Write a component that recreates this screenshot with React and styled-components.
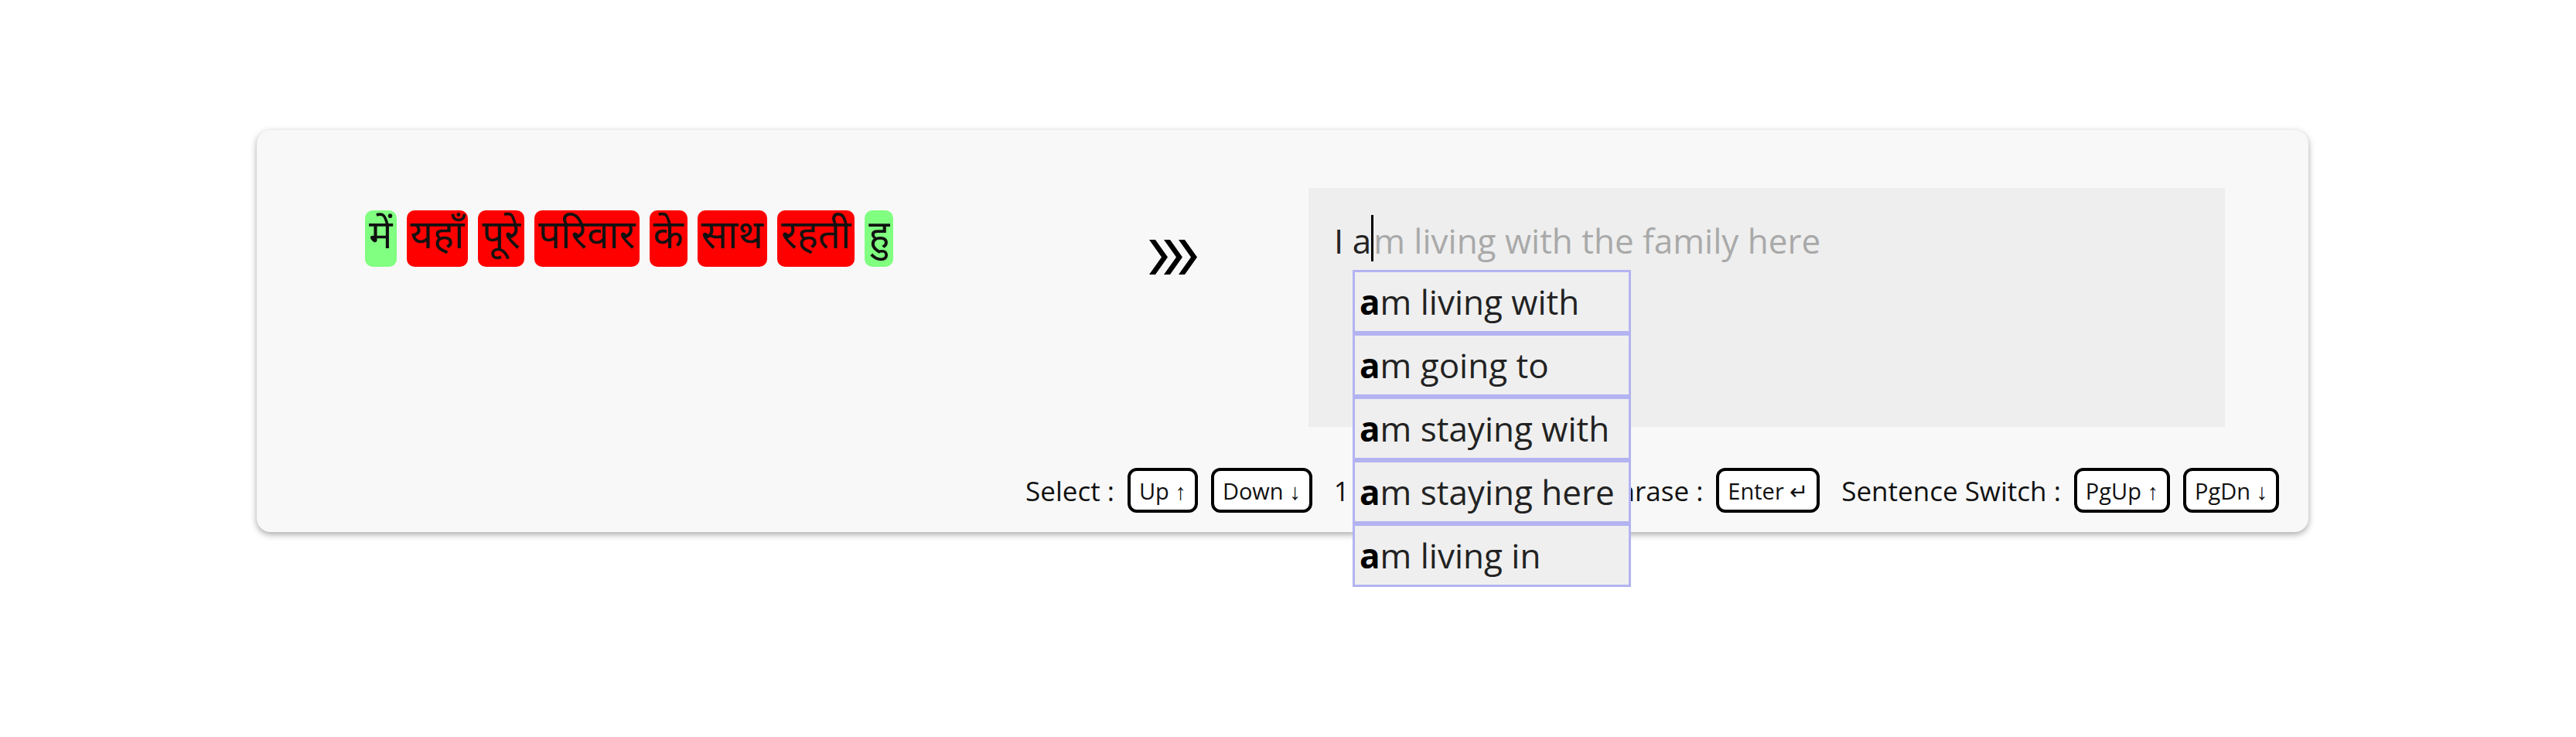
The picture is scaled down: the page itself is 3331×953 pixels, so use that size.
import styled, { createGlobalStyle } from 'styled-components'

const sourceWords = [
  { text: 'में', ok: true },
  { text: 'यहाँ', ok: false },
  { text: 'पूरे', ok: false },
  { text: 'परिवार', ok: false },
  { text: 'के', ok: false },
  { text: 'साथ', ok: false },
  { text: 'रहती', ok: false },
  { text: 'हु', ok: true },
]

const suggestions = ['am living with', 'am going to', 'am staying with', 'am staying here', 'am living in']

function Chevrons() {
  return (
    <svg width="63" height="47" viewBox="0 0 63 47">
      {[0, 19, 38].map(dx => (
        <polygon key={dx} fill="#000" points={`${dx},1 ${dx + 8},1 ${dx + 24},23.5 ${dx + 8},46 ${dx},46 ${dx + 16},23.5`} />
      ))}
    </svg>
  )
}

function App() {
  return (
    <>
      <GlobalStyle />
      <Page>
        <Card>
          <MainRow>
            <Source>
              {sourceWords.map((w, i) => (
                <Word key={i} $ok={w.ok}>{w.text}</Word>
              ))}
            </Source>
            <Arrow>
              <Chevrons />
            </Arrow>
            <InputBox>
              <Typed>I a</Typed>
              <Caret />
              <Ghost>m living with the family here</Ghost>
              <Dropdown>
                {suggestions.map(s => (
                  <Option key={s}>
                    <b>{s[0]}</b>{s.slice(1)}
                  </Option>
                ))}
              </Dropdown>
            </InputBox>
          </MainRow>

          <Footer>
            <Group>
              <Label>Select :</Label>
              <Key>Up ↑</Key>
              <Key>Down ↓</Key>
            </Group>
            <Group>
              <Label>1 - 5 : Quick Pick Add Phrase :</Label>
              <Key>Enter ↵</Key>
            </Group>
            <Group>
              <Label>Sentence Switch :</Label>
              <Key>PgUp ↑</Key>
              <Key>PgDn ↓</Key>
            </Group>
          </Footer>
        </Card>
      </Page>
    </>
  )
}

export default App;

const GlobalStyle = createGlobalStyle`
  body {
    margin: 0;
    background: #fff;
    font-family: "Open Sans", "Noto Sans", sans-serif;
  }
`

const Page = styled.div`
  width: 3331px;
  height: 953px;
  box-sizing: border-box;
  padding: 168px 346px 0 332px;
`

const Card = styled.div`
  background: #f8f8f8;
  border-radius: 18px;
  box-shadow: 0 3px 8px rgba(0, 0, 0, 0.35);
  padding: 75px 38px 25px 140px;
  display: flex;
  flex-direction: column;
`

const MainRow = styled.div`
  display: flex;
  flex-direction: row;
  align-items: flex-start;
  padding-right: 70px;
`

const Source = styled.div`
  width: 1014px;
  margin-top: 29px;
  display: flex;
  flex-direction: row;
  gap: 13px;
`

const Word = styled.span`
  height: 73px;
  display: flex;
  align-items: center;
  padding: 0 5px;
  border-radius: 10px;
  background: ${p => (p.$ok ? '#80ff80' : '#ff0000')};
  color: #111;
  font-family: "Noto Sans Devanagari", "Lohit Devanagari", "FreeSans", "Noto Sans", sans-serif;
  font-size: 51px;
`

const Arrow = styled.div`
  margin-top: 66px;
  width: 63px;
  height: 47px;
  margin-right: 143px;
`

const InputBox = styled.div`
  position: relative;
  flex: 1;
  height: 309px;
  box-sizing: border-box;
  background: #eeeeee;
  padding: 40px 33px;
  font-size: 44px;
  line-height: 56px;
  display: flex;
  align-items: flex-start;
`

const Typed = styled.span`
  color: #222;
  white-space: pre;
`

const Caret = styled.span`
  display: inline-block;
  width: 3px;
  height: 60px;
  margin-top: -5px;
  background: #000;
`

const Ghost = styled.span`
  color: #a9a9a9;
  white-space: pre;
`

const Dropdown = styled.div`
  position: absolute;
  left: 57px;
  top: 106px;
  width: 360px;
  display: flex;
  flex-direction: column;
`

const Option = styled.div`
  height: 82px;
  box-sizing: border-box;
  border: 3px solid #b3b3f2;
  background: #efefef;
  padding: 0 6px;
  display: flex;
  align-items: center;
  font-size: 44px;
  color: #222;
  white-space: pre;

  b {
    font-weight: 700;
    color: #000;
  }
`

const Footer = styled.div`
  display: flex;
  flex-direction: row;
  justify-content: flex-end;
  align-items: center;
  gap: 28px;
  margin-top: 53px;
`

const Group = styled.div`
  display: flex;
  flex-direction: row;
  align-items: center;
  gap: 17px;
`

const Label = styled.span`
  font-size: 35px;
  color: #111;
  white-space: pre;
`

const Key = styled.span`
  height: 58px;
  box-sizing: border-box;
  border: 4px solid #000;
  border-radius: 12px;
  padding: 0 11px;
  display: flex;
  align-items: center;
  font-size: 29px;
  color: #111;
  background: #fff;
`
